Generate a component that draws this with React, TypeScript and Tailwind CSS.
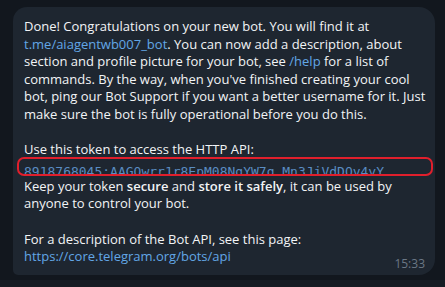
import React from "react";

export default function App() {
  const link = "text-[#62a6e6]";
  return (
    <div className="w-[445px] h-[287px] bg-[#12171e] flex flex-col overflow-hidden" style={{ fontFamily: '"Open Sans", sans-serif' }}>
      <div className="flex-1 pt-[7px] pl-[13px]">
        <div className="relative w-[422px] h-[268px] bg-[#1e2630] rounded-tl-[14px] rounded-tr-[16px] rounded-br-[16px] rounded-bl-[5px] pl-[11px] pr-[6px] pt-[11px] text-[13px] leading-[17.6px] text-[#f2f4f6]">
          <p>
            Done! Congratulations on your new bot. You will find it at{" "}
            <span className={link}>t.me/aiagentwb007_bot</span>. You can now add a description, about section and profile picture for your bot, see{" "}
            <span className={link}>/help</span> for a list of commands. By the way, when you've finished creating your cool bot, ping our Bot Support if you want a better username for it. Just make sure the bot is fully operational before you do this.
          </p>
          <div className="h-[17.6px]" />
          <p>Use this token to access the HTTP API:</p>
          <div className="relative h-[19px]">
            <div className="h-[15px] overflow-hidden pt-[4px] text-[13px] leading-[18px] text-[#5a8cc2]" style={{ fontFamily: '"DejaVu Sans Mono", monospace' }}>
              8918768045:AAGQwrr1r8EpM08NgYW7g_Mn3JjVdDOv4yY
            </div>
            <div className="absolute left-[-7px] top-[-2px] w-[416px] h-[19px] border-2 border-[#e01f2c] rounded-[7px]" />
          </div>
          <p>
            Keep your token <span className="font-semibold">secure</span> and <span className="font-semibold">store it safely</span>, it can be used by anyone to control your bot.
          </p>
          <div className="h-[17.6px]" />
          <p>For a description of the Bot API, see this page:</p>
          <p className={link}>https://core.telegram.org/bots/api</p>
          <div className="absolute right-[10px] bottom-[3px] text-[12px] leading-[16px] text-[#6b7785]">15:33</div>
        </div>
      </div>
      <div className="h-[7px] bg-[#161c24]" />
    </div>
  );
}
